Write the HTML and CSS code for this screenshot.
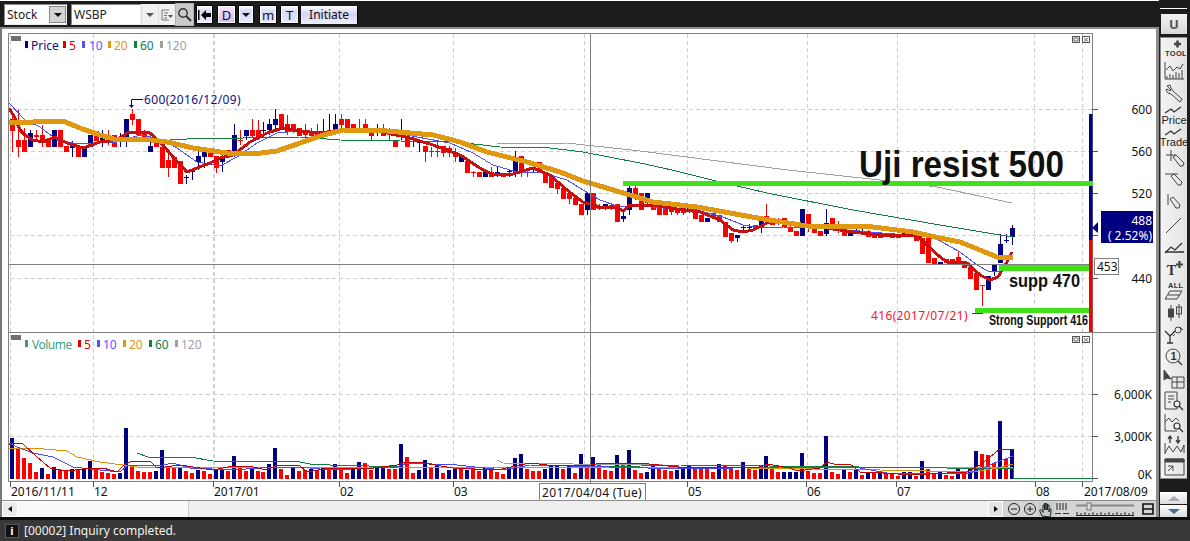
FILE: index.html
```html
<!DOCTYPE html>
<html lang="en">
<head>
<meta charset="utf-8">
<title>WSBP chart</title>
<link rel="stylesheet" href="styles.css">
</head>
<body>
<div class="app">
  <div class="main">
    <div class="left">
      <div class="topbar">
        <div class="combo combo-stock"><span class="combo-text">Stock</span><span class="drop-btn"><i class="tri"></i></span></div>
        <div class="combo combo-code"><span class="combo-text">WSBP</span></div>
        <span class="flat-btn w17"><i class="tri tri-gray"></i></span>
        <span class="flat-btn w17">
          <svg class="ic" width="14" height="14" viewBox="0 0 14 14"><path d="M2 2h7M2 2v10h7M4 5h4M4 7.5h3M4 10h3" fill="none" stroke="#777"/><path d="M8 7h5l-2.5 3z" fill="#555"/></svg>
        </span>
        <span class="flat-btn search">
          <svg class="ic" width="15" height="15" viewBox="0 0 15 15"><circle cx="6" cy="6" r="4.2" fill="none" stroke="#333" stroke-width="1.4"/><path d="M9 9l5 5" stroke="#333" stroke-width="2"/></svg>
        </span>
        <span class="lav-btn w17 ml2">
          <svg class="ic" width="15" height="12" viewBox="0 0 15 12"><path d="M1 1h1.500v10H1z" fill="#000"/><path d="M4 6l5-5v3h5v4H9v3z" fill="#000"/></svg>
        </span>
        <span class="lav-btn purple w19 ml4">D</span>
        <span class="lav-btn w16 ml2"><i class="tri"></i></span>
        <span class="lav-btn w18 ml5">m</span>
        <span class="lav-btn w19 ml3">T</span>
        <span class="lav-btn initiate ml2">Initiate</span>
      </div>
      <div class="chart-window">
        <svg class="chart" width="1154" height="471" viewBox="2 29 1154 471">
          <g class="grid">
            <path d="M10 34V480M93 34V480M339 34V480M453 34V480M584 34V480M687 34V480M807 34V480M897 34V480M1034 34V480M1082 34V480"/>
            <path class="grid-bold" d="M213.500 34V480"/>
            <path d="M10 109H1092M10 151H1092M10 193H1092M10 235H1092M10 278H1092M10 394H1092M10 436H1092"/>
          </g>
          <g id="candles"></g>
          <g id="volumes"></g>
          <g id="lines"></g>

          <path class="cross" d="M590.500 34V483M9 264.500H1092"/>
          <path class="frame" d="M8.500 33.500H1092.500V481.500H8.500ZM8.500 332.500H1156"/>
          <path class="ticks" d="M1092 109h6M1092 151h6M1092 193h6M1092 235h6M1092 278h6M1092 394h6M1092 436h6M1092 478h6M10.500 481v6M93.500 481v6M213.500 481v6M339.500 481v6M453.500 481v6M687.500 481v6M806.500 481v6M896.500 481v6M1035.500 481v6M1082.500 481v6"/>

          <rect class="side-navy" x="1089" y="114" width="3.500" height="126"/>
          <rect class="side-red" x="1089" y="240" width="3.500" height="92"/>
          <path class="side-navy" d="M1092 228l6-6v11z"/>
          <rect class="green-bar" x="623" y="181" width="470" height="5"/>
          <rect class="green-bar" x="999" y="265" width="90" height="6"/>
          <rect class="green-bar" x="975" y="308" width="114" height="5"/>

          <rect class="legend-box" x="11" y="36" width="10" height="5"/>
          <rect class="b-navy" x="25" y="41" width="3" height="7"/><text class="t navy" x="31" y="50">Price</text>
          <rect class="b-red" x="63" y="41" width="3" height="7"/><text class="t red" x="69" y="50">5</text>
          <rect class="b-blue" x="82" y="41" width="3" height="7"/><text class="t blue" x="89" y="50">10</text>
          <rect class="b-orange" x="108" y="41" width="3" height="7"/><text class="t orange" x="114" y="50">20</text>
          <rect class="b-green" x="134" y="41" width="3" height="7"/><text class="t green" x="140" y="50">60</text>
          <rect class="b-gray" x="160" y="41" width="3" height="7"/><text class="t gray" x="166" y="50">120</text>

          <rect class="legend-box" x="11" y="335" width="10" height="5"/>
          <rect class="b-teal" x="25" y="340" width="3" height="7"/><text class="t teal tight" x="32" y="349">Volume</text>
          <rect class="b-red" x="78" y="340" width="3" height="7"/><text class="t red" x="84" y="349">5</text>
          <rect class="b-blue" x="97" y="340" width="3" height="7"/><text class="t blue" x="103" y="349">10</text>
          <rect class="b-orange" x="123" y="340" width="3" height="7"/><text class="t orange" x="129" y="349">20</text>
          <rect class="b-green" x="149" y="340" width="3" height="7"/><text class="t green" x="155" y="349">60</text>
          <rect class="b-gray" x="175" y="340" width="3" height="7"/><text class="t gray" x="181" y="349">120</text>

          <g class="pane-btn"><rect x="1072.500" y="36.500" width="7" height="6"/><path d="M1074 38h4v3h-4z"/><rect x="1082.500" y="36.500" width="7" height="6"/><path d="M1084 38l4 3.500M1088 38l-4 3.500"/></g>
          <g class="pane-btn"><rect x="1072.500" y="336.500" width="7" height="6"/><path d="M1074 338h4v3h-4z"/><rect x="1082.500" y="336.500" width="7" height="6"/><path d="M1084 338l4 3.500M1088 338l-4 3.500"/></g>

          <path class="leader" d="M143 99.500H131.500V105"/><path class="leader-tip" d="M129 105h5l-2.500 3z"/>
          <text class="t navy wide" x="144" y="104">600(2016/12/09)</text>
          <path class="red-leader" d="M972 313.500h11"/>
          <text class="t red-text wide" x="871" y="320">416(2017/07/21)</text>

          <text class="note note-big" x="859" y="177" textLength="205" lengthAdjust="spacingAndGlyphs">Uji resist 500</text>
          <text class="note note-mid" x="1009" y="287" textLength="71" lengthAdjust="spacingAndGlyphs">supp 470</text>
          <text class="note note-small" x="989" y="325" textLength="99" lengthAdjust="spacingAndGlyphs">Strong Support 416</text>

          <g class="axis">
            <text class="t" x="1152" y="114">600</text>
            <text class="t" x="1152" y="156">560</text>
            <text class="t" x="1152" y="198">520</text>
            <text class="t" x="1152" y="283">440</text>
            <text class="t" x="1152" y="399">6,000K</text>
            <text class="t" x="1152" y="441">3,000K</text>
            <text class="t" x="1152" y="479">0K</text>
          </g>

          <rect class="price-box" x="1101" y="211" width="52" height="32"/>
          <text class="t price-text" x="1152" y="225">488</text>
          <text class="t price-text" x="1152" y="240">( 2.52%)</text>

          <rect class="cursor-box" x="1094.500" y="258.500" width="24" height="16"/>
          <text class="t" x="1097" y="271">453</text>

          <g class="dates">
            <text class="t" x="11" y="496">2016/11/11</text>
            <text class="t" x="94" y="496">12</text>
            <text class="t" x="214" y="496">2017/01</text>
            <text class="t" x="340" y="496">02</text>
            <text class="t" x="454" y="496">03</text>
            <text class="t" x="688" y="496">05</text>
            <text class="t" x="807" y="496">06</text>
            <text class="t" x="897" y="496">07</text>
            <text class="t" x="1036" y="496">08</text>
            <text class="t" x="1084" y="496">2017/08/09</text>
          </g>
          <rect class="cursor-box" x="539.500" y="483.500" width="106" height="17"/>
          <text class="t wide" x="542" y="497">2017/04/04 (Tue)</text>
        </svg>
      </div>
      <div class="scrollrow">
        <span class="scroll-btn"><i class="tri-left"></i></span>
        <span class="scroll-track"></span>
        <span class="scroll-thumb"></span>
        <span class="scroll-btn scroll-btn-r"><i class="tri-right"></i></span>
        <div class="zoomtools">
          <svg width="16" height="14" viewBox="0 0 16 14"><circle cx="8" cy="7" r="5.500" class="ln"/><path d="M5 7h6" class="ln"/></svg>
          <svg width="16" height="14" viewBox="0 0 16 14"><circle cx="8" cy="7" r="5.500" class="ln"/><path d="M5 7h6M8 4v6" class="ln"/></svg>
          <svg class="hand" width="16" height="15" viewBox="0 0 16 15"><path d="M4 14L1.500 8.500 3 7.500l2 3V3h1.500v5-6.500H8V8 2h1.500v6-5H11v7l.5-3H13v3l-1 5z" class="ln"/></svg>
          <svg width="16" height="14" viewBox="0 0 16 14"><path d="M3 1v7M6 1v7M9 1v7M12 1v7" class="ln"/><path d="M1 11.500h6M9 11.500h6" class="ln-red"/></svg>
          <svg class="slider" width="60" height="14" viewBox="0 0 60 14"><path d="M1 3.500h58" class="sl-track"/><rect x="12" y="1" width="4" height="7" class="sl-thumb"/><path d="M1 13.500h58M2 13v-3M6 13v-2M10 13v-3M14 13v-2M18 13v-3M22 13v-2M26 13v-3M30 13v-2M34 13v-3M38 13v-2M42 13v-3M46 13v-2M50 13v-3M54 13v-2M58 13v-3" class="ln"/></svg>
          <svg class="split" width="12" height="12" viewBox="0 0 12 12"><path d="M1 1h10v10H1zM1 6h10" class="ln-bold"/></svg>
        </div>
      </div>
    </div>
    <div class="side">
      <div class="side-line"></div>
      <div class="u-btn">U</div>
      <div class="tools">
        <div class="tool"><svg width="24" height="20" viewBox="0 0 24 20"><path d="M12 5h7M15.500 1.500v7" class="tb"/><text class="tool-mini" x="3" y="17">TOOL</text></svg></div>
        <div class="tool"><svg width="24" height="20" viewBox="0 0 24 20"><path d="M3 1v17h19M5 15v3M8 13v5M11 14v4M14 11v7M17 12v6M20 9v9" class="tl"/><path d="M4 9l4-4 3 5 4-4 3 2 3-5" class="tl"/></svg></div>
        <div class="tool"><svg width="24" height="20" viewBox="0 0 24 20"><path d="M5 3l3-1 1 3 2 3 9 8-2 3-9-8-3-1-2-3 1-1 3 2 1-1z" class="tl"/></svg></div>
        <div class="tool tool-label"><svg width="24" height="8" viewBox="0 0 24 8"><path d="M3 7l6-4 3 3 7-5" class="tl2"/></svg><span>Price</span></div>
        <div class="tool tool-label"><svg width="24" height="8" viewBox="0 0 24 8"><path d="M3 7l6-4 3 3 7-5" class="tl2"/></svg><span>Trade</span></div>
        <div class="tool"><svg width="24" height="20" viewBox="0 0 24 20"><path d="M4 6h10M9 1v11" class="tl"/><path d="M11 8l3-2 8 8-1 3-3 0z" class="tl"/></svg></div>
        <div class="tool"><svg width="24" height="20" viewBox="0 0 24 20"><path d="M3 3h13" class="tl"/><path d="M9 5l3-2 8 8-1 3-3 0z" class="tl"/></svg></div>
        <div class="tool"><svg width="24" height="20" viewBox="0 0 24 20"><path d="M6 1v11" class="tl"/><path d="M8 6l3-2 7 8-1 3-3 0z" class="tl"/></svg></div>
        <div class="tool"><svg width="24" height="20" viewBox="0 0 24 20"><path d="M4 18L19 3" class="tl"/></svg></div>
        <div class="tool"><svg width="24" height="20" viewBox="0 0 24 20"><path d="M3 15h19M3 16l6-6 4 3 7-7" class="tl2"/></svg></div>
        <div class="tool"><span class="t-plus">T</span><svg class="plus-ic" width="7" height="7" viewBox="0 0 8 8"><path d="M0 4h8M4 0v8" class="tb"/></svg></div>
        <div class="tool"><svg width="24" height="20" viewBox="0 0 24 20"><text class="tool-mini" x="6" y="7">ALL</text><path d="M3 18l5-8h12l-5 8zM6 14h12" class="tl"/></svg></div>
        <div class="tool"><svg width="24" height="20" viewBox="0 0 24 20"><path d="M9 2v16M17 1v14" class="tl"/><rect x="6.500" y="6" width="5" height="8" class="fill-dk"/><rect x="14.500" y="4" width="5" height="7" class="tl"/></svg></div>
        <div class="tool"><svg width="24" height="20" viewBox="0 0 24 20"><path d="M3 6l5 5 5-5M8 11v7M5 18h6" class="tl2"/><circle cx="16" cy="5" r="3" class="tl"/><path d="M13 9l-2 2M18 2l3 3" class="tl"/></svg></div>
        <div class="tool"><svg width="24" height="20" viewBox="0 0 24 20"><circle cx="11" cy="9" r="7" class="tl"/><path d="M16 14l4 4" class="tl2"/><text class="tool-one" x="8.500" y="13">1</text></svg></div>
        <div class="tool"><svg width="24" height="20" viewBox="0 0 24 20"><path d="M2 1v10l3-2 4 1z" class="fill-dk"/><path d="M10 8h12v11H10zM10 13h12M15 8v11" class="tl"/></svg></div>
        <div class="tool"><svg width="24" height="20" viewBox="0 0 24 20"><path d="M3 1h12v17H3zM6 5h6M6 8h6M6 11h3" class="tl"/><circle cx="15" cy="13" r="3" class="tl-w"/><path d="M17 15l4 4" class="tl2"/></svg></div>
        <div class="tool"><svg width="24" height="20" viewBox="0 0 24 20"><path d="M3 1v17h12M3 9l4-4 3 4 4-4 3 3" class="tl"/><circle cx="15" cy="13" r="3" class="tl-w"/><path d="M17 15l4 4" class="tl2"/></svg></div>
        <div class="tool"><svg width="24" height="20" viewBox="0 0 24 20"><path d="M3 8v11M3 18l4-7 4 6 4-6 4 6 3-7v8" class="tl"/><path d="M8 8V2M6 4l2-3 2 3M16 1v6M14 5l2 3 2-3" class="tl2"/></svg></div>
        <div class="tool"><svg width="24" height="20" viewBox="0 0 24 20"><path d="M3 2h19v16H3z" class="tl"/><path d="M3 2h19v3H3z" class="fill-dk"/><path d="M6 14l5-5M6 9h5v5" class="tl"/></svg></div>
      </div>
      <div class="arrows">
        <span class="arrow-btn"><i class="tri-up"></i></span>
        <span class="arrow-btn"><i class="tri-down"></i></span>
      </div>
    </div>
  </div>
  <div class="status">
    <span class="info">i</span>
    <span class="msg">[00002] Inquiry completed.</span>
  </div>
</div>
<script src="chart.js"></script>
</body>
</html>
```
FILE: styles.css
```css
* { box-sizing: border-box; }
html, body { margin: 0; padding: 0; height: 100%; overflow: hidden; background: #1c1c1c; }
body { font-family: "Noto Sans", "Liberation Sans", sans-serif; font-size: 12px; color: #000; }

.app { width: 1190px; height: 541px; display: flex; flex-direction: column; }
.main { display: flex; height: 517px; }
.left { width: 1159px; display: flex; flex-direction: column; }

/* top toolbar */
.topbar { height: 27px; display: flex; align-items: center; padding: 1px 0 0 4px; border-top: 1px solid #fff; background: #1c1c1c; }
.combo { height: 21px; background: #fff; border: 1px solid #8c8c8c; border-right-color: #eee; border-bottom-color: #eee; display: flex; align-items: center; font-size: 12px; color: #222; position: relative; }
.combo-text { padding-left: 2px; }
.combo-stock { width: 63px; }
.combo-code { width: 70px; margin-left: 4px; }
.drop-btn { position: absolute; right: 0; top: 1px; width: 17px; height: 17px; background: #d4d4d4; border: 1px solid #888; display: flex; align-items: center; justify-content: center; }
.tri { display: block; width: 0; height: 0; border-left: 4px solid transparent; border-right: 4px solid transparent; border-top: 4px solid #111; }
.tri-gray { border-top-color: #555; }
.flat-btn { height: 21px; background: #f0f0f0; display: flex; align-items: center; justify-content: center; border-left: 1px solid #ddd; }
.search { width: 19px; height: 23px; background: #c9c9c9; border: 1px solid #b0b0b0; }
.w16 { width: 16px; } .w17 { width: 17px; } .w18 { width: 18px; } .w19 { width: 19px; }
.ml2 { margin-left: 2px; } .ml3 { margin-left: 3px; } .ml4 { margin-left: 4px; } .ml5 { margin-left: 5px; }
.lav-btn { height: 19px; background: linear-gradient(#ffffff, #d8d8f8 30%, #e8e8ff); border: 1px solid #000; box-shadow: inset 0 0 0 1px #fff; display: flex; align-items: center; justify-content: center; font-size: 13px; color: #111; }
.purple { background: linear-gradient(#f2e8ff, #d6b8f2); }
.initiate { width: 57px; height: 18px; border: 0; box-shadow: none; background: linear-gradient(#fff, #d4d4f2 45%, #efeffc); font-size: 12px; border-right: 1px solid #000; }
.ic { display: block; }

/* chart window */
.chart-window { height: 473px; border-top: 2px solid #8c8c8c; border-left: 2px solid #777; border-right: 3px solid #8c8c8c; background: #fff; }
.chart { display: block; }
.grid path { fill: none; stroke: #cfcfcf; stroke-width: 1; stroke-dasharray: 4 3; shape-rendering: crispEdges; }
.grid .grid-bold { stroke-width: 2; }
.cross { fill: none; stroke: #808080; stroke-width: 1; }
.frame { fill: none; stroke: #808080; stroke-width: 1; }
.ticks { fill: none; stroke: #555; stroke-width: 1; shape-rendering: crispEdges; }
.green-bar { fill: #42e018; }
.side-navy { fill: #000080; }
.side-red { fill: #f00000; }
.legend-box { fill: #707070; }
.b-navy { fill: #000080; } .b-red { fill: #e00000; } .b-blue { fill: #5050ff; } .b-orange { fill: #e09a10; } .b-green { fill: #108040; } .b-gray { fill: #a0a0a0; } .b-teal { fill: #40a070; }
.t { font-family: "Noto Sans", "Liberation Sans", sans-serif; font-size: 12px; fill: #111; }
.wide { letter-spacing: .35px; }
.tight { letter-spacing: -.5px; }
.navy { fill: #101080; } .red { fill: #e00000; } .blue { fill: #5858ff; } .orange { fill: #e09a10; } .green { fill: #108048; } .gray { fill: #a0a0a8; } .teal { fill: #40a080; }
.red-text { fill: #ff1030; }
.pane-btn rect { fill: #fff; stroke: #555; }
.pane-btn path { fill: none; stroke: #666; }
.leader { fill: none; stroke: #000080; }
.leader-tip { fill: #000080; }
.red-leader { stroke: #e00000; }
.note { font-family: "Liberation Sans", sans-serif; font-weight: 700; fill: #111; }
.note-big { font-size: 36px; }
.note-mid { font-size: 18px; }
.note-small { font-size: 15px; }
.axis text { text-anchor: end; }
.price-box { fill: #000080; }
.price-text { fill: #fff; text-anchor: end; }
.cursor-box { fill: #fff; stroke: #808080; }
.c-n { fill: #000080; } .c-r { fill: #ff0000; }
.ma { fill: none; stroke-linejoin: bevel; shape-rendering: crispEdges; }

/* scroll row */
.scrollrow { height: 17px; display: flex; background: #d4d4d4; border-top: 1px solid #8c8c8c; border-left: 2px solid #777; border-right: 3px solid #8c8c8c; }
.scroll-btn { width: 16px; background: #ececec; border: 1px solid #fff; display: flex; align-items: center; justify-content: center; }
.scroll-btn-r { width: 15px; margin-right: 3px; background: #e4e4e4; }
.scroll-track { width: 170px; background: repeating-conic-gradient(#f4f4f4 0 25%, #fff 0 50%) 0 0 / 2px 2px; }
.scroll-thumb { width: 800px; background: #efefef; border-left: 1px solid #ccc; }
.tri-left { width: 0; height: 0; border-top: 3px solid transparent; border-bottom: 3px solid transparent; border-right: 4px solid #111; }
.tri-right { width: 0; height: 0; border-top: 3px solid transparent; border-bottom: 3px solid transparent; border-left: 4px solid #111; }
.zoomtools { flex: 1; display: flex; align-items: center; background: #d4d4d4; }
.zoomtools svg { display: block; }
.hand { background: #c4cccc; }
.slider { margin-left: 5px; }
.split { margin-left: 7px; }
.ln { fill: none; stroke: #222; stroke-width: 1; }
.ln-bold { fill: none; stroke: #111; stroke-width: 1.600; }
.ln-red { fill: none; stroke: #901020; stroke-width: 1.200; }
.sl-track { stroke: #888; stroke-width: 2; }
.sl-thumb { fill: #ddd; stroke: #777; }

/* right panel */
.side { width: 31px; padding-left: 1px; display: flex; flex-direction: column; align-items: flex-start; }
.side-line { width: 27px; height: 1px; background: #fff; margin-top: 8px; }
.u-btn { width: 26px; height: 20px; margin: 5px 0 0 1px; background: linear-gradient(#f2f2f2, #d8d8d8); color: #555; font-weight: 700; font-size: 13px; display: flex; align-items: center; justify-content: center; }
.tools { width: 27px; height: 442px; margin-top: 3px; padding: 0 0 2px 0; background: linear-gradient(90deg, #f4f4f4, #e2e2e2); border: 1px solid #8c8c8c; border-right: 0; display: flex; flex-direction: column; }
.tool { height: 22px; display: flex; align-items: center; justify-content: center; position: relative; flex: none; }
.tool svg { display: block; }
.tool-label { flex-direction: column; justify-content: flex-end; }
.tool-label span { font-family: "Liberation Sans", sans-serif; font-size: 11px; line-height: 12px; color: #222; }
.tool-label svg { margin-bottom: 0; }
.tl { fill: none; stroke: #444; stroke-width: 1; }
.tl2 { fill: none; stroke: #333; stroke-width: 1.300; }
.tl-w { fill: #f0f0f0; stroke: #333; stroke-width: 1.200; }
.tb { fill: none; stroke: #444; stroke-width: 2.500; }
.fill-dk { fill: #444; stroke: #444; }
.tool-mini { font-family: "Liberation Sans", sans-serif; font-size: 7.500px; font-weight: 700; fill: #333; letter-spacing: .3px; }
.tool-one { font-family: "Liberation Sans", sans-serif; font-size: 11px; font-weight: 700; fill: #333; }
.t-plus { font-family: "Liberation Serif", serif; font-weight: 700; font-size: 14px; line-height: 14px; color: #333; margin: 3px 5px 0 0; }
.plus-ic { position: absolute; right: 4px; top: 3px; }
.arrows { margin-top: 13px; width: 27px; display: flex; flex-direction: column; gap: 1px; }
.arrow-btn { height: 12px; background: linear-gradient(#fff, #dcdcdc); display: flex; align-items: center; justify-content: center; }
.tri-up { width: 0; height: 0; border-left: 6px solid transparent; border-right: 6px solid transparent; border-bottom: 5px solid #aaa; }
.tri-down { width: 0; height: 0; border-left: 6px solid transparent; border-right: 6px solid transparent; border-top: 5px solid #4a6a90; }

/* status bar */
.status { height: 24px; margin-top: 0; border-top: 3px solid #0c0c0c; background: #383838; display: flex; align-items: center; padding-left: 5px; color: #f0f0f0; }
.info { width: 14px; height: 14px; background: #111; border: 1px solid #555; color: #fff; font-weight: 700; font-size: 11px; line-height: 12px; text-align: center; }
.msg { margin-left: 5px; font-size: 12px; }
```
FILE: chart.js
```js
// Candles: colour, body top, body bottom, wick high, wick low (in chart pixels)
var candles = "r119,131,111,152 r140,147,110,157 r140,152,128,152 n133,147,130,147 r135,137,130,140 r135,143,125,147 r140,147,138,147 n130,147,130,147 r130,147,130,147 r146,152,146,152 n146,148,141,157 r146,157,146,157 n147,157,147,157 n135,147,135,147 r131,141,131,141 n135,140,130,147 r137,142,130,145 r135,147,135,147 n138,142,133,147 n119,138,119,147 r114,120,109,125 r119,135,119,135 r133,137,130,140 n146,152,137,152 r138,147,138,147 r147,168,147,168 r160,168,153,177 r157,168,157,168 r161,184,161,184 n177,178,175,184 n171,172,168,180 n156,162,150,170 n151,157,150,168 r150,157,150,157 r156,168,156,173 n158,162,150,172 r150,151,150,158 n135,155,124,157 r140,141,130,145 n130,136,130,140 r130,136,119,137 r130,137,120,140 n130,131,122,137 n124,130,119,135 n119,125,109,130 r114,130,114,130 r124,132,115,135 r124,130,124,133 r128,136,128,136 r130,135,124,138 r132,136,128,138 r133,135,124,138 n131,133,119,135 n130,132,114,135 n124,132,114,132 r119,125,114,130 r119,130,119,130 r124,128,124,130 r128,132,119,133 r124,129,119,132 r132,136,130,141 n130,131,124,136 r133,136,124,136 r130,131,128,141 r140,147,140,147 n130,131,119,140 r137,147,131,147 n141,142,141,147 n142,143,142,152 r146,152,146,162 r151,152,147,157 r151,152,141,157 r146,153,146,157 r148,153,146,157 r152,157,148,162 n156,162,156,162 r161,173,161,173 r172,173,171,177 r172,177,172,177 n172,177,172,177 r172,177,167,177 n172,173,167,177 r173,177,173,177 n171,172,170,177 n161,172,151,177 r156,172,156,177 r172,173,168,177 n167,168,162,172 r162,172,162,172 r173,183,173,183 r177,188,177,188 r183,189,183,194 r188,199,188,199 r193,199,193,204 r198,205,198,205 r204,215,204,215 n193,210,193,215 r193,210,193,210 r208,209,204,210 n204,208,204,210 r205,208,203,210 r204,222,204,222 n216,219,212,222 n188,210,186,215 r188,198,186,200 r193,210,193,210 n193,203,193,206 r203,210,203,210 r203,215,203,215 r207,215,205,215 r208,212,206,215 r210,213,208,215 r208,213,206,215 n208,209,206,213 r210,219,210,219 r215,222,215,222 n218,222,218,222 r213,217,210,218 r215,222,215,222 r222,237,222,237 r233,241,233,243 n235,238,235,242 n227,228,225,232 n227,228,224,232 r225,228,225,230 n220,227,220,233 r216,222,204,222 r220,225,220,225 r220,223,218,225 r218,227,218,227 r227,232,225,232 r231,236,231,236 n209,236,209,236 r214,227,214,232 r228,233,228,233 r231,236,231,236 n223,234,209,236 r218,225,218,228 r225,228,221,233 r228,236,228,236 n233,236,233,236 n230,231,228,234 n231,232,228,232 r232,237,230,237 r233,238,233,238 r233,238,233,238 r234,237,234,237 r233,238,233,238 r235,238,235,238 n232,235,232,235 n233,234,233,235 r235,241,235,241 r238,254,238,254 r238,263,238,263 r258,265,258,265 n262,265,262,265 r259,263,259,263 r259,263,259,263 r257,263,252,263 r265,268,263,268 r267,279,267,279 r273,290,273,290 r285,286,285,306 n276,290,276,290 n265,271,265,276 n244,263,234,263 n240,241,234,243 n228,237,225,245".split(" ");

// Volume bars: colour + height above the baseline
var volumes = "n41 r31 r21 r16 r7 n11 r5 n12 r9 r9 n10 r9 n11 n18 r11 r7 r6 r5 n6 n51 r14 r8 r7 r7 n8 n29 r12 r12 n11 r8 r6 n9 r8 r5 n9 n10 r8 n23 r11 r8 n12 r8 r7 n15 n31 r10 r4 n11 r8 r9 n10 r9 n12 r11 n15 r12 r6 n10 n17 r16 r9 n11 n13 r10 r10 n35 r22 r6 n9 n19 r12 n14 r6 n9 n11 r11 n9 r10 r8 n11 r9 r7 r5 n11 n21 n25 r10 r8 r8 n10 n14 n14 r10 n14 r6 n25 r15 n22 r15 r9 r8 n24 r16 n29 r9 r6 n7 n14 r12 r9 r8 n9 n12 n14 r12 r10 r10 r7 n15 r14 r10 r9 n17 r10 r9 n13 n23 r10 r7 n7 n7 n7 n26 r8 r6 r6 n43 r7 r5 n10 r7 n9 r4 n6 r7 n6 r6 r6 r3 n7 n7 r3 n18 r10 r6 n8 r4 r3 n12 r6 n12 n28 r25 r24 r16 n58 r20 n30".split(" ");

var lines = [
  // Price pane moving averages
  ["#5050ff", 1, "9,103 25,120 40,127 57,140 73,143 100,143 117,142 140,135 157,138 177,148 197,162 220,166 237,157 257,143 277,133 300,131 333,131 367,130 393,132 417,137 450,143 473,153 493,165 517,172 540,172 567,180 583,190 600,200 620,207 640,206 663,208 697,210 723,217 743,225 763,228 783,227 820,228 860,231 903,235 933,237 960,252 977,265 988,271 1000,271 1012,268"],
  ["#108040", 1, "137,142 187,139 300,137 340,140 400,141 457,142 500,147 550,148 583,152 640,163 672,170 720,182 767,193 853,210 940,225 1000,235 1013,237"],
  ["#a0a0a0", 1, "497,144 567,143 640,151 788,170 880,180 937,187 1012,203"],
  ["#c81010", 3, "9,108 15,118 20,130 25,135 33,140 43,142 55,137 67,143 83,148 100,142 117,140 127,133 137,132 150,133 163,145 173,157 187,172 197,168 210,163 220,158 233,155 250,142 267,133 283,128 300,131 320,133 340,130 367,129 387,133 410,138 433,145 460,155 480,168 493,175 513,174 533,168 550,175 567,190 583,202 600,207 617,207 623,211 630,205 653,205 677,209 700,212 720,220 733,230 743,232 753,230 767,223 780,222 803,225 827,228 853,232 887,236 917,235 927,245 940,257 947,262 967,263 980,275 990,280 998,277 1007,262 1012,252"],
  ["#e09810", 5, "9,122 33,122 63,121 80,128 100,135 117,140 143,139 167,142 193,148 227,153 253,154 277,151 300,143 320,136 343,130 387,131 433,135 460,142 487,152 527,162 560,172 583,181 620,192 653,202 697,207 730,213 763,219 807,226 873,227 913,232 940,238 960,242 980,250 997,257 1013,257"],
  // Volume pane moving averages
  ["#a0a0a0", 1, "497,460 503,463 573,464 663,465 680,467 1013,467"],
  ["#108040", 1, "137,453 148,457 190,457 213,461 300,462 310,464 330,465 340,465 397,467 563,468 680,465 947,468 1013,468 1014,478.500 1092,478.500"],
  ["#e09000", 1, "9,448 33,448 67,451 77,457 100,462 123,465 137,467 200,467 330,468 493,467 563,468 680,467 880,470 973,472 997,468 1013,464"],
  ["#4848ff", 1, "9,443 17,447 33,453 53,457 73,467 100,470 120,472 128,465 163,465 173,463 190,468 233,470 273,467 300,467 330,470 397,467 407,463 457,465 503,470 530,465 687,469 780,467 860,468 887,473 920,473 970,473 997,462 1013,456"],
  ["#c80000", 1, "9,445 15,443 23,444 37,457 50,468 67,471 90,468 103,468 117,472 124,465 130,462 150,461 157,468 180,465 213,470 233,466 253,467 267,470 277,465 300,466 307,472 330,468 357,468 373,468 397,465 403,462 423,463 453,468 497,470 530,463 547,465 590,465 603,463 640,463 687,468 760,467 767,464 790,468 797,471 820,468 827,462 837,465 850,464 860,472 883,473 913,475 947,473 967,472 980,465 1000,449 1013,449"]
];

function xOf(i) { return Math.round(12 + i * 5.988); }

var html = "";
candles.forEach(function (c, i) {
  var p = c.slice(1).split(",").map(Number), cls = "c-" + c[0], x = xOf(i);
  html += '<rect class="' + cls + '" x="' + x + '" y="' + p[2] + '" width="1" height="' + (p[3] - p[2]) + '"/>';
  html += '<rect class="' + cls + '" x="' + (x - 2) + '" y="' + p[0] + '" width="5" height="' + Math.max(1, p[1] - p[0]) + '"/>';
});
document.getElementById("candles").innerHTML = html;

html = "";
volumes.forEach(function (v, i) {
  var h = Number(v.slice(1));
  html += '<rect class="c-' + v[0] + '" x="' + (xOf(i) - 2) + '" y="' + (479 - h) + '" width="4" height="' + h + '"/>';
});
document.getElementById("volumes").innerHTML = html;

html = "";
lines.forEach(function (l) {
  html += '<polyline class="ma" stroke="' + l[0] + '" stroke-width="' + l[1] + '" points="' + l[2] + '"/>';
});
document.getElementById("lines").innerHTML = html;
```
